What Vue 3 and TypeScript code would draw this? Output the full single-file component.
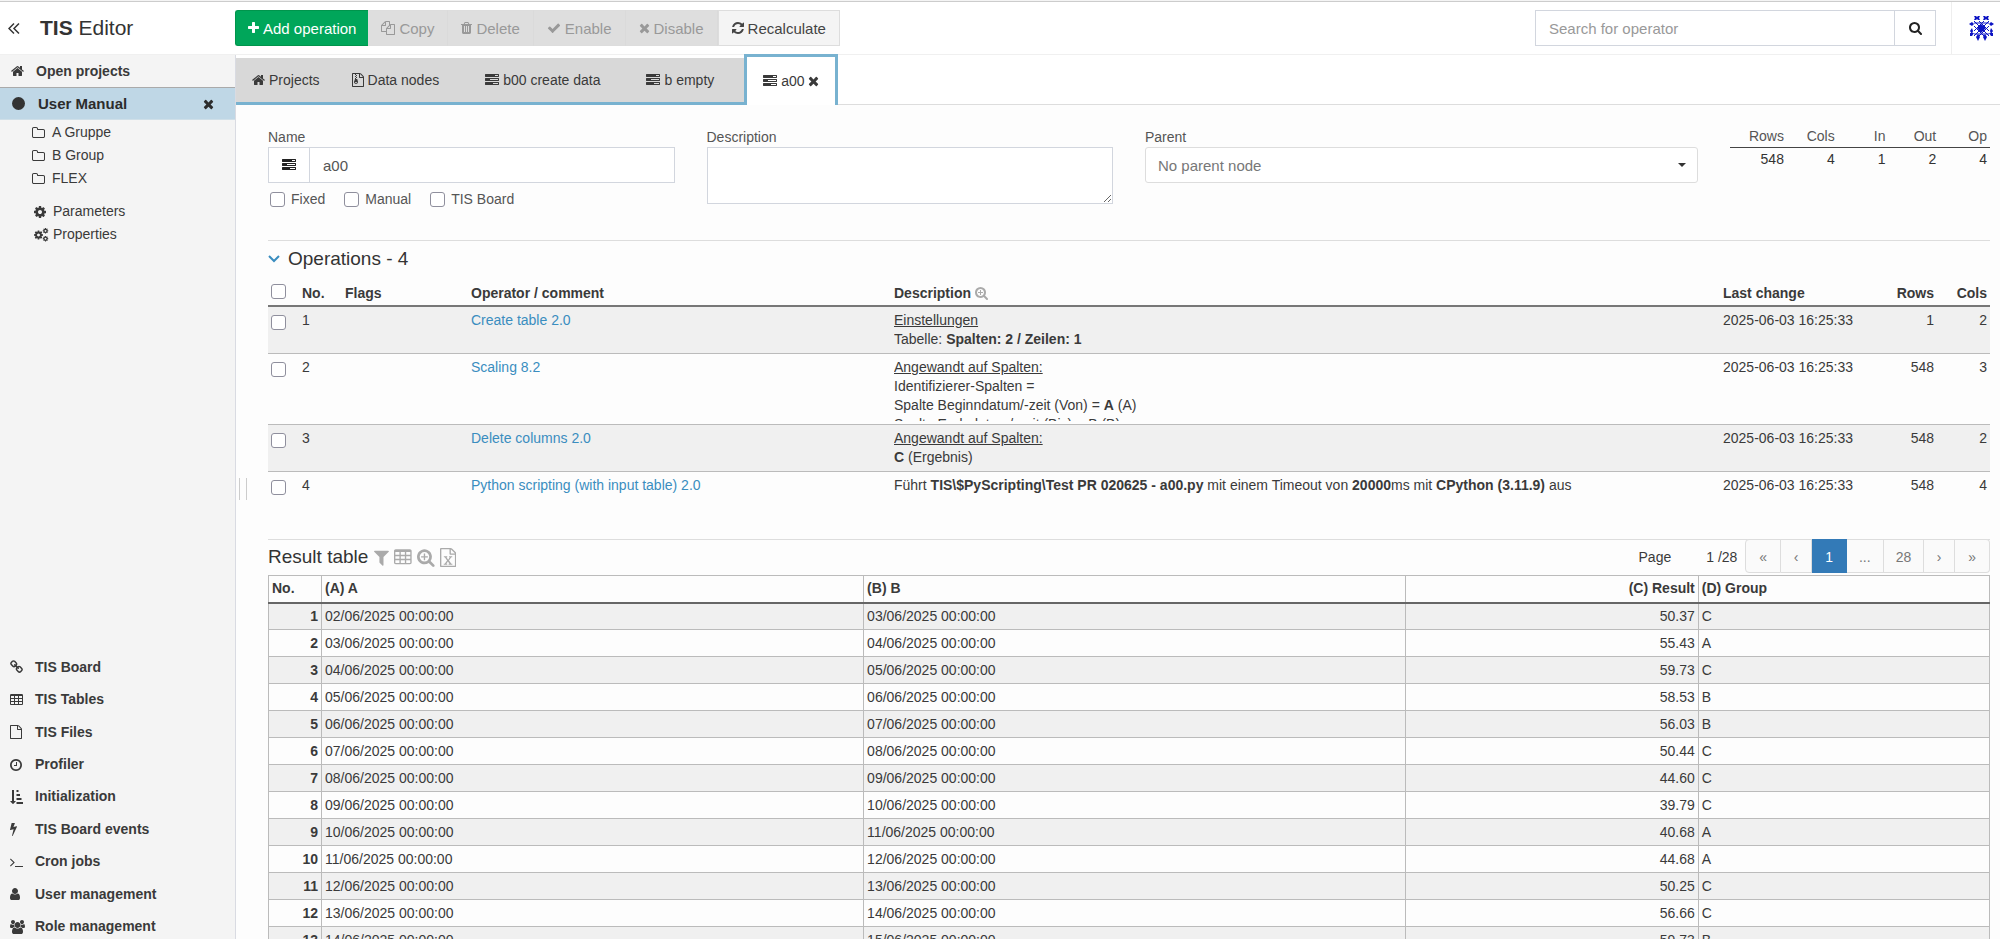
<script setup lang="ts">
import { computed, defineComponent, h, ref } from 'vue'

interface IconShape {
  x: number
  w: number
  d: string
}

const PAGE_OUTLINE =
  'M1596 380q28 28 48 76t20 88v1152q0 40-28 68t-68 28h-1344q-40 0-68-28t-28-68v-1600q0-40 28-68t68-28h896q40 0 88 20t76 48zm-444-244v376h376q-10-29-22-41l-313-313q-12-12-41-22zm384 1528v-1024h-416q-40 0-68-28t-28-68v-416h-768v1536h1280z'
const LENS =
  'M1216 832q0-185-131.5-316.5t-316.5-131.5-316.5 131.5-131.5 316.5 131.5 316.5 316.5 131.5 316.5-131.5 131.5-316.5zm512 832q0 52-38 90t-90 38q-54 0-90-38l-343-342q-179 124-399 124-143 0-273.5-55.5t-225-150-150-225-55.5-273.5 55.5-273.5 150-225 225-150 273.5-55.5 273.5 55.5 225 150 150 225 55.5 273.5q0 220-124 399l343 343q37 37 37 90z'
const GEAR =
  'M1152 896q0-106-75-181t-181-75-181 75-75 181 75 181 181 75 181-75 75-181zm512-109v222q0 12-8 23t-20 13l-185 28q-19 54-39 91 35 50 107 138 10 12 10 25t-9 23q-27 37-99 108t-94 71q-12 0-26-9l-138-108q-44 23-91 38-16 136-29 186-7 28-36 28h-222q-14 0-24.5-8.5t-11.5-21.5l-28-184q-49-16-90-37l-141 107q-10 9-25 9-14 0-25-11-126-114-165-168-7-10-7-23 0-12 8-23 15-21 51-66.5t54-70.5q-27-50-41-99l-183-27q-13-2-21-12.5t-8-23.5v-222q0-12 8-23t19-13l186-28q14-46 39-92-40-57-107-138-10-12-10-24 0-10 9-23 26-36 98.5-107.5t94.5-71.5q13 0 26 10l138 107q44-23 91-38 16-136 29-186 7-28 36-28h222q14 0 24.5 8.5t11.5 21.5l28 184q49 16 90 37l142-107q9-9 24-9 13 0 25 10 129 119 165 170 7 8 7 22 0 12-8 23-15 21-51 66.5t-54 70.5q26 50 41 98l183 28q13 2 21 12.5t8 23.5z'

const shapes: Record<string, IconShape> = {
  home: { x: 64, w: 1664, d: 'M1472 992v480q0 26-19 45t-45 19h-384v-384h-256v384h-384q-26 0-45-19t-19-45v-480q0-1 .5-3t.5-3l575-474 575 474q1 2 1 6zm223-69l-62 74q-8 9-21 11h-3q-13 0-21-7l-692-577-692 577q-12 8-24 7-13-2-21-11l-62-74q-8-10-7-23.5t11-21.5l719-599q32-26 76-26t76 26l244 204v-195q0-14 9-23t23-9h192q14 0 23 9t9 23v408l219 182q10 8 11 21.5t-7 23.5z' },
  plus: { x: 192, w: 1408, d: 'M1600 736v192q0 40-28 68t-68 28h-416v416q0 40-28 68t-68 28h-192q-40 0-68-28t-28-68v-416h-416q-40 0-68-28t-28-68v-192q0-40 28-68t68-28h416v-416q0-40 28-68t68-28h192q40 0 68 28t28 68v416h416q40 0 68 28t28 68z' },
  times: { x: 192, w: 1408, d: 'M1490 1322q0 40-28 68l-136 136q-28 28-68 28t-68-28l-294-294-294 294q-28 28-68 28t-68-28l-136-136q-28-28-28-68t28-68l294-294-294-294q-28-28-28-68t28-68l136-136q28-28 68-28t68 28l294 294 294-294q28-28 68-28t68 28l136 136q28 28 28 68t-28 68l-294 294 294 294q28 28 28 68z' },
  check: { x: 0, w: 1792, d: 'M1671 566q0 40-28 68l-724 724-136 136q-28 28-68 28t-68-28l-136-136-362-362q-28-28-28-68t28-68l136-136q28-28 68-28t68 28l294 295 656-657q28-28 68-28t68 28l136 136q28 28 28 68z' },
  refresh: { x: 128, w: 1536, d: 'M1639 1056q0 5-1 7-64 268-268 434.5t-478 166.5q-146 0-282.5-55t-243.5-157l-129 129q-19 19-45 19t-45-19-19-45v-448q0-26 19-45t45-19h448q26 0 45 19t19 45-19 45l-137 137q71 66 161 102t187 36q134 0 250-65t186-179q11-17 53-117 8-23 30-23h192q13 0 22.5 9.5t9.5 22.5zm25-800v448q0 26-19 45t-45 19h-448q-26 0-45-19t-19-45 19-45l138-138q-148-137-349-137-134 0-250 65t-186 179q-11 17-53 117-8 23-30 23h-199q-13 0-22.5-9.5t-9.5-22.5v-7q65-268 270-434.5t480-166.5q146 0 284 55.5t245 156.5l130-129q19-19 45-19t45 19 19 45z' },
  copy: { x: 0, w: 1792, d: 'M1696 384q40 0 68 28t28 68v1216q0 40-28 68t-68 28h-960q-40 0-68-28t-28-68v-288h-544q-40 0-68-28t-28-68v-672q0-40 20-88t48-76l408-408q28-28 76-48t88-20h416q40 0 68 28t28 68v328q68-40 128-40h416zm-544 213l-299 299h299v-299zm-640-384l-299 299h299v-299zm196 647l316-316v-416h-384v416q0 40-28 68t-68 28h-416v640h512v-256q0-40 20-88t48-76zm956 804v-1152h-384v416q0 40-28 68t-68 28h-416v640h896z' },
  trash: { x: 192, w: 1408, d: 'M704 1376v-704q0-14-9-23t-23-9h-64q-14 0-23 9t-9 23v704q0 14 9 23t23 9h64q14 0 23-9t9-23zm256 0v-704q0-14-9-23t-23-9h-64q-14 0-23 9t-9 23v704q0 14 9 23t23 9h64q14 0 23-9t9-23zm256 0v-704q0-14-9-23t-23-9h-64q-14 0-23 9t-9 23v704q0 14 9 23t23 9h64q14 0 23-9t9-23zm-544-992h448l-48-117q-7-9-17-11h-317q-10 2-17 11zm928 32v64q0 14-9 23t-23 9h-96v948q0 83-47 143.5t-113 60.5h-832q-66 0-113-58.5t-47-141.5v-952h-96q-14 0-23-9t-9-23v-64q0-14 9-23t23-9h309l70-167q15-37 54-63t79-26h320q40 0 79 26t54 63l70 167h309q14 0 23 9t9 23z' },
  search: { x: 64, w: 1664, d: LENS },
  zoom: { x: 64, w: 1664, d: 'M1088 800v64q0 13-9.5 22.5t-22.5 9.5h-224v224q0 13-9.5 22.5t-22.5 9.5h-64q-13 0-22.5-9.5t-9.5-22.5v-224h-224q-13 0-22.5-9.5t-9.5-22.5v-64q0-13 9.5-22.5t22.5-9.5h224v-224q0-13 9.5-22.5t22.5-9.5h64q13 0 22.5 9.5t9.5 22.5v224h224q13 0 22.5 9.5t9.5 22.5z' + LENS },
  tasks: { x: 0, w: 1792, d: 'M1024 1408h640v-128h-640v128zm-384-512h1024v-128h-1024v128zm640-512h384v-128h-384v128zm512 832v256q0 26-19 45t-45 19h-1664q-26 0-45-19t-19-45v-256q0-26 19-45t45-19h1664q26 0 45 19t19 45zm0-512v256q0 26-19 45t-45 19h-1664q-26 0-45-19t-19-45v-256q0-26 19-45t45-19h1664q26 0 45 19t19 45zm0-512v256q0 26-19 45t-45 19h-1664q-26 0-45-19t-19-45v-256q0-26 19-45t45-19h1664q26 0 45 19t19 45z' },
  file: { x: 128, w: 1536, d: PAGE_OUTLINE },
  archive: { x: 128, w: 1536, d: PAGE_OUTLINE + 'M512 128h128v128h-128zM640 256h128v128h-128zM512 384h128v128h-128zM640 512h128v128h-128zM512 640h128v128h160l101 390q17 220-261 240-278-20-261-240l133-390zM640 1150q-130 0-130 66t130 66 130-66-130-66z' },
  sheet: { x: 128, w: 1536, d: PAGE_OUTLINE + 'M480 768h330v110h-70l156 220 156-220h-70v-110h300v110h-90l-216 290 226 310h90v110h-350v-110h80l-146-210-146 210h80v110h-330v-110h90l226-310-216-290h-70z' },
  folder: { x: 64, w: 1664, d: 'M1600 1312v-704q0-40-28-68t-68-28h-704q-40 0-68-28t-28-68v-64q0-40-28-68t-68-28h-320q-40 0-68 28t-28 68v960q0 40 28 68t68 28h1216q40 0 68-28t28-68zm128-704v704q0 92-66 158t-158 66h-1216q-92 0-158-66t-66-158v-960q0-92 66-158t158-66h320q92 0 158 66t66 158v32h672q92 0 158 66t66 158z' },
  gear: { x: 128, w: 1536, d: GEAR },
  table: { x: 64, w: 1664, d: 'M1728 288v1088q0 66-47 113t-113 47h-1344q-66 0-113-47t-47-113v-1088q0-66 47-113t113-47h1344q66 0 113 47t47 113zM192 384h384v256h-384zM704 384h384v256h-384zM1216 384h384v256h-384zM192 768h384v256h-384zM704 768h384v256h-384zM1216 768h384v256h-384zM192 1152h384v256h-384zM704 1152h384v256h-384zM1216 1152h384v256h-384z' },
  clock: { x: 128, w: 1536, d: 'M1024 544v448q0 14-9 23t-23 9h-320q-14 0-23-9t-9-23v-64q0-14 9-23t23-9h224v-352q0-14 9-23t23-9h64q14 0 23 9t9 23zm416 352q0-148-73-273t-198-198-273-73-273 73-198 198-73 273 73 273 198 198 273 73 273-73 198-198 73-273zm224 0q0 209-103 385.5t-279.5 279.5-385.5 103-385.5-103-279.5-279.5-103-385.5 103-385.5 279.5-279.5 385.5-103 385.5 103 279.5 279.5 103 385.5z' },
  bolt: { x: 448, w: 896, d: 'M1333 566q18 20 7 44l-540 1157q-13 25-42 25-4 0-14-2-17-5-25.5-19t-4.5-30l197-808-406 101q-4 1-12 1-18 0-31-11-18-15-13-39l201-825q4-14 16-23t28-9h328q19 0 32 12.5t13 29.5q0 8-5 18l-171 463 396-98q8-2 12-2 19 0 34 15z' },
  terminal: { x: 64, w: 1664, d: 'M649 983l-466 466q-10 10-23 10t-23-10l-50-50q-10-10-10-23t10-23l393-393-393-393q-10-10-10-23t10-23l50-50q10-10 23-10t23 10l466 466q10 10 10 23t-10 23zm1079 457v64q0 14-9 23t-23 9h-960q-14 0-23-9t-9-23v-64q0-14 9-23t23-9h960q14 0 23 9t9 23z' },
  user: { x: 256, w: 1280, d: 'M1536 1399q0 109-62.5 187t-150.5 78h-854q-88 0-150.5-78t-62.5-187q0-85 8.5-160.5t31.5-152 58.5-131 94-89 134.5-34.5q131 128 313 128t313-128q76 0 134.5 34.5t94 89 58.5 131 31.5 152 8.5 160.5zm-256-887q0 159-112.5 271.5t-271.5 112.5-271.5-112.5-112.5-271.5 112.5-271.5 271.5-112.5 271.5 112.5 112.5 271.5z' },
  users: { x: 0, w: 1920, d: 'M593 896q-162 5-265 128h-134q-82 0-138-40.5t-56-118.5q0-353 124-353 6 0 43.5 21t97.5 42.5 119 21.5q67 0 133-23-5 37-5 66 0 139 81 256zm1071 637q0 120-73 189.5t-194 69.5h-874q-121 0-194-69.5t-73-189.5q0-53 3.5-103.5t14-109 26.5-108.5 43-97.5 62-81 85.5-53.5 111.5-20q10 0 43 21.5t73 48 107 48 135 21.5 135-21.5 107-48 73-48 43-21.5q61 0 111.5 20t85.5 53.5 62 81 43 97.5 26.5 108.5 14 109 3.5 103.5zm-1024-1277q0 106-75 181t-181 75-181-75-75-181 75-181 181-75 181 75 75 181zm704 384q0 159-112.5 271.5t-271.5 112.5-271.5-112.5-112.5-271.5 112.5-271.5 271.5-112.5 271.5 112.5 112.5 271.5zm576 225q0 78-56 118.5t-138 40.5h-134q-103-123-265-128 81-117 81-256 0-29-5-66 66 23 133 23 59 0 119-21.5t97.5-42.5 43.5-21q124 0 124 353zm-128-609q0 106-75 181t-181 75-181-75-75-181 75-181 181-75 181 75 75 181z' },
  sort: { x: 0, w: 1792, d: 'M736 1440q0 12-10 24l-319 319q-10 9-23 9-12 0-23-9l-320-320q-15-16-7-35 8-20 30-20h192v-1376q0-14 9-23t23-9h192q14 0 23 9t9 23v1376h192q14 0 23 9t9 23zM832 0h256v256h-256zM832 512h448v256h-448zM832 1024h640v256h-640zM832 1536h832v256h-832z' },
  link: { x: 64, w: 1664, d: 'M1520 1216q0-40-28-68l-208-208q-28-28-68-28-42 0-72 32 3 3 19 18.5t21.5 21.5 15 19 13 25.5 3.5 27.5q0 40-28 68t-68 28q-15 0-27.5-3.5t-25.5-13-19-15-21.5-21.5-18.5-19q-33 31-33 73 0 40 28 68l206 207q27 27 68 27 40 0 68-26l147-146q28-28 28-67zm-703-705q0-40-28-68l-206-207q-28-28-68-28-39 0-68 27l-147 146q-28 28-28 67 0 40 28 68l208 208q27 27 68 27 42 0 72-31-3-3-19-18.5t-21.5-21.5-15-19-13-25.5-3.5-27.5q0-40 28-68t68-28q15 0 27.5 3.5t25.5 13 19 15 21.5 21.5 18.5 19q33-31 33-73zm895 705q0 120-85 203l-147 146q-83 83-203 83-121 0-204-85l-206-207q-83-83-83-203 0-123 88-209l-88-88q-86 88-208 88-120 0-204-84l-208-208q-84-84-84-204t85-203l147-146q83-83 203-83 121 0 204 85l206 207q83 83 83 203 0 123-88 209l88 88q86-88 208-88 120 0 204 84l208 208q84 84 84 204z' },
  filter: { x: 192, w: 1408, d: 'M1595 295q17 41-14 70l-493 493v742q0 42-39 59-13 5-25 5-27 0-45-19l-256-256q-19-19-19-45v-486l-493-493q-31-29-14-70 17-39 59-39h1280q42 0 59 39z' },
}

const gearCluster: string[] = [
  'translate(-96 224) scale(0.75)',
  'translate(1060 -50) scale(0.46)',
  'translate(1060 960) scale(0.46)',
]

const FaIcon = defineComponent({
  props: { name: { type: String, required: true } },
  setup(props) {
    return () => {
      if (props.name === 'gears') {
        return h('svg', { class: 'icon', viewBox: '0 0 1920 1792', 'aria-hidden': 'true' },
          gearCluster.map((t) => h('path', { d: GEAR, transform: t, 'fill-rule': 'evenodd' })))
      }
      const s = shapes[props.name]
      return h('svg', { class: 'icon', viewBox: `${s.x} 0 ${s.w} 1792`, 'aria-hidden': 'true' },
        [h('path', { d: s.d, 'fill-rule': 'evenodd' })])
    }
  },
})

const actions = [
  { icon: 'copy', label: 'Copy' },
  { icon: 'trash', label: 'Delete' },
  { icon: 'check', label: 'Enable' },
  { icon: 'times', label: 'Disable' },
]

const tabs = [
  { icon: 'home', label: 'Projects', closable: false },
  { icon: 'archive', label: 'Data nodes', closable: true },
  { icon: 'tasks', label: 'b00 create data', closable: true },
  { icon: 'tasks', label: 'b empty', closable: true },
  { icon: 'tasks', label: 'a00', closable: true },
]
const activeTab = ref(4)

const folders = ['A Gruppe', 'B Group', 'FLEX']
const tools = [
  { icon: 'link', label: 'TIS Board' },
  { icon: 'table', label: 'TIS Tables' },
  { icon: 'file', label: 'TIS Files' },
  { icon: 'clock', label: 'Profiler' },
  { icon: 'sort', label: 'Initialization' },
  { icon: 'bolt', label: 'TIS Board events' },
  { icon: 'terminal', label: 'Cron jobs' },
  { icon: 'user', label: 'User management' },
  { icon: 'users', label: 'Role management' },
]

const nodeName = ref('a00')
const nodeText = ref('')
const searchText = ref('')
const flags = ref([
  { label: 'Fixed', on: false },
  { label: 'Manual', on: false },
  { label: 'TIS Board', on: false },
])
const stats = [
  { label: 'Rows', value: 548 },
  { label: 'Cols', value: 4 },
  { label: 'In', value: 1 },
  { label: 'Out', value: 2 },
  { label: 'Op', value: 4 },
]

interface Piece {
  t: string
  b?: boolean
  u?: boolean
}
interface Operation {
  name: string
  lines: Piece[][]
  rows: number
  cols: number
}
const changed = '2025-06-03 16:25:33'
const operations: Operation[] = [
  {
    name: 'Create table 2.0',
    lines: [[{ t: 'Einstellungen', u: true }], [{ t: 'Tabelle: ' }, { t: 'Spalten: 2 / Zeilen: 1', b: true }]],
    rows: 1,
    cols: 2,
  },
  {
    name: 'Scaling 8.2',
    lines: [
      [{ t: 'Angewandt auf Spalten:', u: true }],
      [{ t: 'Identifizierer-Spalten =' }],
      [{ t: 'Spalte Beginndatum/-zeit (Von) = ' }, { t: 'A', b: true }, { t: ' (A)' }],
      [{ t: 'Spalte Endedatum/-zeit (Bis) = B (B)' }],
    ],
    rows: 548,
    cols: 3,
  },
  {
    name: 'Delete columns 2.0',
    lines: [[{ t: 'Angewandt auf Spalten:', u: true }], [{ t: 'C', b: true }, { t: ' (Ergebnis)' }]],
    rows: 548,
    cols: 2,
  },
  {
    name: 'Python scripting (with input table) 2.0',
    lines: [[
      { t: 'Führt ' },
      { t: 'TIS\\$PyScripting\\Test PR 020625 - a00.py', b: true },
      { t: ' mit einem Timeout von ' },
      { t: '20000', b: true },
      { t: 'ms mit ' },
      { t: 'CPython (3.11.9)', b: true },
      { t: ' aus' },
    ]],
    rows: 548,
    cols: 4,
  },
]

const measured: [string, string][] = [
  ['50.37', 'C'], ['55.43', 'A'], ['59.73', 'C'], ['58.53', 'B'], ['56.03', 'B'],
  ['50.44', 'C'], ['44.60', 'C'], ['39.79', 'C'], ['40.68', 'A'], ['44.68', 'A'],
  ['50.25', 'C'], ['56.66', 'C'], ['59.73', 'B'],
]
const stamp = (day: number): string => `${String(day).padStart(2, '0')}/06/2025 00:00:00`
const resultRows = computed(() =>
  measured.map(([result, group], i) => ({ no: i + 1, a: stamp(i + 2), b: stamp(i + 3), result, group })),
)

const pages = ['«', '‹', '1', '...', '28', '›', '»']
</script>

<template>
  <div class="app">
    <header class="topbar">
      <div class="brand">
        <button class="plain" type="button" aria-label="Collapse menu">
          <svg class="chevrons" viewBox="0 0 12 12" aria-hidden="true"><path d="M6 1 1 6l5 5M11 1 6 6l5 5" /></svg>
        </button>
        <h1><b>TIS</b> Editor</h1>
      </div>
      <div class="actions">
        <button class="add" type="button"><FaIcon name="plus" />Add operation</button>
        <button v-for="a in actions" :key="a.label" class="off" type="button" disabled><FaIcon :name="a.icon" />{{ a.label }}</button>
        <button class="recalc" type="button"><FaIcon name="refresh" />Recalculate</button>
      </div>
      <form class="search" @submit.prevent>
        <input v-model="searchText" type="text" placeholder="Search for operator" aria-label="Search for operator" />
        <button type="submit" aria-label="Search"><FaIcon name="search" /></button>
      </form>
      <a class="avatar" href="#" aria-label="Account">
        <svg viewBox="0 0 25 25" aria-hidden="true">
          <path d="M5 0h2l1 1 1-1h2l-1 2 1 2h-2l-1-1-1 1h-2l1-2zM14 0h2l1 1 1-1h2l-1 2 1 2h-2l-1-1-1 1h-2l1-2z" />
          <path d="M0 8l3-2 2 2-2 2zM20 8l2-2 3 2-3 2zM1 15l2-3 1 3-1 3zM21 15l1-3 2 3-2 3zM1 17h4l-2 3h-2zM20 17h4v3h-2z" />
          <path d="M7 21l2-3 2 3-2 4zM14 21l2-3 2 3-2 4z" />
          <path class="weave" d="M5 5l15 15M20 5 5 20M10 5l10 10M15 5 5 15M5 10l10 10M20 10 10 20" />
          <path class="weave" d="M5 7h15M5 18h15" />
          <path d="M12 8l5 4-5 5-4-5z" />
        </svg>
      </a>
    </header>

    <div class="body">
      <aside class="sidebar">
        <a class="open" href="#"><FaIcon name="home" />Open projects</a>
        <div class="project">
          <span class="dot"></span>
          <a href="#">User Manual</a>
          <button class="plain" type="button" aria-label="Close project"><FaIcon name="times" /></button>
        </div>
        <nav class="tree" aria-label="Project">
          <a v-for="f in folders" :key="f" href="#"><FaIcon name="folder" />{{ f }}</a>
        </nav>
        <nav class="tree extras" aria-label="Project settings">
          <a href="#"><FaIcon name="gear" />Parameters</a>
          <a href="#"><FaIcon name="gears" />Properties</a>
        </nav>
        <nav class="tools" aria-label="Tools">
          <a v-for="t in tools" :key="t.label" href="#"><span class="slot"><FaIcon :name="t.icon" /></span>{{ t.label }}</a>
        </nav>
      </aside>
      <div class="grip"><i></i></div>

      <main>
        <div class="tabs">
          <div v-for="(t, i) in tabs" :key="t.label" class="tab" :class="{ active: i === activeTab }">
            <button class="plain" type="button" @click="activeTab = i"><FaIcon :name="t.icon" />{{ t.label }}</button>
            <button v-if="t.closable" class="plain close" type="button" aria-label="Close tab"><FaIcon name="times" /></button>
          </div>
        </div>

        <div class="content">
          <section class="form">
            <div class="w3">
              <label for="node-name">Name</label>
              <div class="named">
                <span class="addon"><FaIcon name="tasks" /></span>
                <input id="node-name" v-model="nodeName" type="text" />
              </div>
              <div class="flags">
                <label v-for="f in flags" :key="f.label"><input v-model="f.on" class="tick" type="checkbox" />{{ f.label }}</label>
              </div>
            </div>
            <div class="w3">
              <label for="node-text">Description</label>
              <textarea id="node-text" v-model="nodeText"></textarea>
            </div>
            <div class="w4">
              <label for="node-parent">Parent</label>
              <div class="picker">
                <select id="node-parent"><option>No parent node</option></select>
                <svg viewBox="0 0 8 4" aria-hidden="true"><path d="M0 0h8L4 4z" /></svg>
              </div>
            </div>
            <table class="stats w2">
              <thead><tr><th v-for="s in stats" :key="s.label">{{ s.label }}</th></tr></thead>
              <tbody><tr><td v-for="s in stats" :key="s.label">{{ s.value }}</td></tr></tbody>
            </table>
          </section>

          <section class="operations">
            <h2>
              <svg class="fold" viewBox="0 0 12 8" aria-hidden="true"><path d="M1 1l5 5 5-5" /></svg>
              Operations - 4
            </h2>
            <table>
              <colgroup>
                <col class="c-tick" /><col class="c-no" /><col class="c-flags" /><col class="c-op" /><col />
                <col class="c-last" /><col class="c-rows" /><col class="c-cols" />
              </colgroup>
              <thead>
                <tr>
                  <th><input class="tick" type="checkbox" aria-label="Select all" /></th>
                  <th>No.</th><th>Flags</th><th>Operator / comment</th>
                  <th>Description <FaIcon name="zoom" /></th>
                  <th>Last change</th><th class="num">Rows</th><th class="num">Cols</th>
                </tr>
              </thead>
              <tbody>
                <tr v-for="(o, i) in operations" :key="o.name">
                  <td><input class="tick" type="checkbox" :aria-label="`Select ${o.name}`" /></td>
                  <td>{{ i + 1 }}</td>
                  <td></td>
                  <td><a href="#">{{ o.name }}</a></td>
                  <td>
                    <div class="detail">
                      <div v-for="(line, n) in o.lines" :key="n"><span v-for="(p, k) in line" :key="k" :class="{ b: p.b, u: p.u }">{{ p.t }}</span></div>
                    </div>
                  </td>
                  <td>{{ changed }}</td>
                  <td class="num">{{ o.rows }}</td>
                  <td class="num">{{ o.cols }}</td>
                </tr>
              </tbody>
            </table>
          </section>

          <section class="results">
            <div class="bar">
              <h2>Result table</h2>
              <div class="icons">
                <button class="plain" type="button" aria-label="Filter"><FaIcon name="filter" /></button>
                <button class="plain" type="button" aria-label="Columns"><FaIcon name="table" /></button>
                <button class="plain" type="button" aria-label="Zoom"><FaIcon name="zoom" /></button>
                <button class="plain" type="button" aria-label="Export"><FaIcon name="sheet" /></button>
              </div>
              <span class="page">Page</span><span class="count">1 /28</span>
              <div class="pager">
                <button v-for="p in pages" :key="p" type="button" :class="{ current: p === '1', word: p.length > 1 }">{{ p }}</button>
              </div>
            </div>
            <table>
              <colgroup><col class="r-no" /><col class="r-wide" /><col class="r-wide" /><col class="r-res" /><col /></colgroup>
              <thead>
                <tr><th>No.</th><th>(A) A</th><th>(B) B</th><th class="num">(C) Result</th><th>(D) Group</th></tr>
              </thead>
              <tbody>
                <tr v-for="r in resultRows" :key="r.no">
                  <th class="num" scope="row">{{ r.no }}</th>
                  <td>{{ r.a }}</td>
                  <td>{{ r.b }}</td>
                  <td class="num">{{ r.result }}</td>
                  <td>{{ r.group }}</td>
                </tr>
              </tbody>
            </table>
          </section>
        </div>
      </main>
    </div>
  </div>
</template>

<style>
body {
  margin: 0;
  overflow: hidden;
}
svg.icon {
  height: 14px;
  width: auto;
  fill: currentColor;
  flex: none;
}
</style>

<style scoped>
* {
  box-sizing: border-box;
}
.app {
  display: flex;
  flex-direction: column;
  height: 100vh;
  border-top: 1px solid #f4f4f4;
  font: 14px/19px "Liberation Sans", Arial, sans-serif;
  color: #3a3a3a;
  background: #fff;
}
a {
  color: inherit;
  text-decoration: none;
}
button,
input,
select,
textarea {
  font: inherit;
  color: inherit;
  margin: 0;
}
.plain {
  display: inline-flex;
  align-items: center;
  padding: 0;
  border: 0;
  background: none;
}
h1,
h2 {
  margin: 0;
  font-weight: 400;
  color: #333;
}

/* top bar */
.topbar {
  display: flex;
  align-items: center;
  flex: none;
  height: 54px;
  border-top: 1px solid #ccc;
  border-bottom: 1px solid #f0f0f0;
  font-size: 15px;
}
.brand {
  display: flex;
  align-items: center;
  gap: 20px;
  width: 235px;
  padding-left: 8px;
}
h1 {
  font-size: 21px;
  line-height: 28px;
}
.chevrons {
  width: 12px;
  height: 13px;
  fill: none;
  stroke: #333;
  stroke-width: 1.5;
}
.actions {
  display: flex;
}
.actions button {
  display: flex;
  align-items: center;
  gap: 4px;
  height: 36px;
  padding: 0 13px;
  border: 1px solid #ddd;
  border-width: 1px 0;
}
.actions .add {
  padding: 0 12px;
  border: 1px solid #00954c;
  border-right: 0;
  border-radius: 3px 0 0 3px;
  background: #00a65a;
  color: #fff;
}
.actions .off {
  background: #dedede;
  border-right: 1px solid #dadada;
  color: #999;
}
.actions .recalc {
  border-width: 1px;
  background: #f4f4f4;
  color: #444;
}
.search {
  display: flex;
  width: 401px;
  margin-left: auto;
}
.search input {
  flex: 1;
  min-width: 0;
  height: 36px;
  padding: 0 13px;
  border: 1px solid #d2d6de;
  background: #fff;
}
.search input::placeholder {
  color: #999;
}
.search button {
  display: flex;
  align-items: center;
  justify-content: center;
  width: 41px;
  border: 1px solid #d2d6de;
  border-left: 0;
  background: #fff;
  color: #222;
}
.avatar {
  display: flex;
  align-items: center;
  align-self: stretch;
  width: 49px;
  margin-left: 15px;
  padding-left: 17px;
  border-left: 1px solid #eee;
}
.avatar svg {
  width: 25px;
  height: 25px;
  fill: #0d14c4;
}
.avatar .weave {
  fill: none;
  stroke: #0d14c4;
}

/* sidebar */
.body {
  display: flex;
  flex: 1;
  min-height: 0;
}
.sidebar {
  display: flex;
  flex-direction: column;
  flex: none;
  width: 236px;
  overflow: hidden;
  border-right: 1px solid #d9dbe2;
  background: #f4f4f4;
}
.open {
  display: flex;
  align-items: center;
  gap: 12px;
  height: 33px;
  padding-left: 11px;
  border-bottom: 1px solid #aaa;
  font-weight: 700;
}
.project {
  display: flex;
  align-items: center;
  height: 32px;
  padding: 0 21px 0 12px;
  border-bottom: 1px solid #cfdfe8;
  background: #bfd7e6;
  color: #2c2c2c;
  font-size: 15px;
  font-weight: 700;
}
.project a {
  flex: 1;
}
.dot {
  width: 13px;
  height: 13px;
  margin-right: 13px;
  border-radius: 50%;
  background: #333;
}
.tree {
  padding: 1px 0 0 32px;
}
.tree a {
  display: flex;
  align-items: center;
  gap: 7px;
  height: 23px;
}
.extras {
  padding: 10px 0 0 34px;
}
.extras a {
  gap: 4px;
}
.extras a:first-child {
  gap: 7px;
}
.tools {
  display: flex;
  flex-direction: column;
  height: 292px;
  margin: auto 0 -4px;
  padding-left: 10px;
  font-weight: 700;
}
.tools a {
  display: flex;
  align-items: center;
  flex: 1;
}
.slot {
  display: flex;
  width: 25px;
}
.grip {
  display: flex;
  align-items: center;
  flex: none;
  width: 13px;
  margin-right: -13px;
  padding-left: 3px;
  z-index: 1;
}
.grip i {
  width: 8px;
  height: 22px;
  margin-bottom: 16px;
  border: 1px solid #ccc;
  border-width: 0 1px;
}

/* tabs */
main {
  display: flex;
  flex-direction: column;
  flex: 1;
  min-width: 0;
  background: #fdfdfd;
}
.tabs {
  display: flex;
  align-items: flex-end;
  flex: none;
  height: 50px;
  border-bottom: 1px solid #ddd;
  background: #fff;
}
.tab {
  display: flex;
  align-items: center;
  height: 47px;
  margin-bottom: -1px;
  padding: 0 16px;
  border-bottom: 3px solid #78b2d0;
  background: #d8d8d8;
}
.tab .plain {
  gap: 4px;
}
.tab .close {
  margin-left: 3px;
  visibility: hidden;
}
.tab.active {
  height: 51px;
  border: 3px solid #78b2d0;
  border-bottom-width: 0;
  background: #fff;
}
.tab.active .close {
  visibility: visible;
}

/* node form */
.content {
  flex: 1;
  min-height: 0;
  padding: 22px 10px 0 32px;
  overflow: hidden;
}
.form {
  display: grid;
  grid-template-columns: repeat(12, 1fr);
  column-gap: 32px;
  align-items: start;
  height: 113px;
  color: #555;
}
.w3 {
  grid-column: span 3;
}
.w4 {
  grid-column: span 4;
}
.w2 {
  grid-column: span 2;
}
.form label {
  display: block;
  line-height: 20px;
}
.named {
  display: flex;
  height: 36px;
  border: 1px solid #d2d6de;
  background: #fff;
  font-size: 15px;
}
.addon {
  display: flex;
  align-items: center;
  justify-content: center;
  width: 41px;
  border-right: 1px solid #d2d6de;
  color: #222;
}
.named input {
  flex: 1;
  min-width: 0;
  padding: 0 13px;
  border: 0;
  background: none;
}
.flags {
  display: flex;
  gap: 19px;
  padding: 6px 0 0 2px;
}
.form .flags label {
  display: flex;
  align-items: center;
  gap: 6px;
}
.tick {
  appearance: none;
  display: block;
  width: 15px;
  height: 15px;
  border: 1px solid #8f8f9d;
  border-radius: 3px;
  background: #fff;
}
.tick:checked {
  background: #3a8dbf;
}
textarea {
  display: block;
  width: 100%;
  height: 57px;
  border: 1px solid #d2d6de;
  background: #fff;
  resize: both;
}
.picker {
  display: grid;
  align-items: center;
}
.picker > * {
  grid-area: 1 / 1;
}
.picker select {
  appearance: none;
  width: 100%;
  height: 36px;
  padding: 0 12px;
  border: 1px solid #ddd;
  border-radius: 3px;
  background: #fff;
  color: #777;
  font-size: 15px;
}
.picker svg {
  justify-self: end;
  width: 8px;
  height: 4px;
  margin-right: 12px;
  fill: #333;
  pointer-events: none;
}
table {
  width: 100%;
  border-collapse: collapse;
  table-layout: fixed;
}
th {
  text-align: left;
}
.num {
  text-align: right;
}
.stats th,
.stats td {
  padding: 0 3px;
  text-align: right;
  font-weight: 400;
}
.stats th {
  height: 20px;
  border-bottom: 1px solid #444;
}
.stats th:first-child {
  width: 22%;
}
.stats td {
  height: 25px;
  color: #333;
}

/* operations */
.operations {
  border-top: 1px solid #ddd;
}
h2 {
  display: flex;
  align-items: center;
  font-size: 19px;
  line-height: 36px;
}
.operations h2 {
  height: 36px;
  gap: 8px;
}
.fold {
  width: 12px;
  height: 8px;
  fill: none;
  stroke: #3a8dbf;
  stroke-width: 2;
}
.operations a {
  color: #3a8dbf;
}
.operations th,
.operations td {
  padding: 4px 3px 3px;
  vertical-align: top;
}
.operations th {
  height: 29px;
  padding-top: 7px;
  padding-bottom: 2px;
  border-bottom: 2px solid #777;
}
.operations th :deep(.icon) {
  margin-bottom: -2px;
  color: #aaa;
}
.operations td {
  height: 47px;
  border-top: 1px solid #bbb;
}
.operations tbody tr:nth-child(odd),
.results tbody tr:nth-child(odd) {
  background: #f0f0f0;
}
.operations td .tick {
  margin-top: 4px;
}
.detail {
  max-height: 63px;
  overflow: hidden;
}
.b {
  font-weight: 700;
}
.u {
  text-decoration: underline;
}
.c-tick {
  width: 31px;
}
.c-no {
  width: 43px;
}
.c-flags {
  width: 126px;
}
.c-op {
  width: 423px;
}
.c-last {
  width: 143px;
}
.c-rows {
  width: 74px;
}
.c-cols {
  width: 53px;
}

/* results */
.results {
  margin-top: 21px;
}
.bar {
  display: flex;
  height: 36px;
  border-top: 1px solid #ddd;
  line-height: 34px;
}
.bar h2 {
  line-height: 34px;
  height: 34px;
}
.icons {
  display: flex;
  align-items: center;
  gap: 5px;
  height: 34px;
  margin: 0 auto 0 6px;
  color: #aaa;
}
.icons :deep(.icon) {
  height: 19px;
}
.page {
  margin-right: 35px;
}
.count {
  margin-right: 8px;
}
.pager {
  display: flex;
  height: 34px;
  margin-top: -1px;
}
.pager button {
  min-width: 31px;
  padding: 0 11px;
  border: 1px solid #ddd;
  border-left-width: 0;
  background: #fafafa;
  color: #777;
}
.pager button:first-child {
  border-left-width: 1px;
  border-radius: 4px 0 0 4px;
  padding: 0 13px;
}
.pager button:last-child {
  border-radius: 0 4px 4px 0;
  padding: 0 13px;
}
.pager .word {
  padding: 0 12px;
}
.pager .current {
  padding: 0 13px;
  border-color: #337ab7;
  background: #337ab7;
  color: #fff;
}
.results th,
.results td {
  height: 27px;
  padding: 0 3px;
  border: 1px solid #bbb;
}
.results thead th {
  border-bottom: 2px solid #666;
}
.r-no {
  width: 53px;
}
.r-wide {
  width: 31.5%;
}
.r-res {
  width: 17%;
}
</style>
